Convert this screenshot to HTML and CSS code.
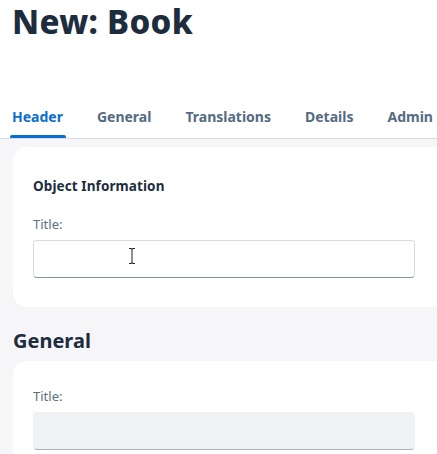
FILE: index.html
```html
<!DOCTYPE html>
<html>
<head>
<meta charset="utf-8">
<link rel="stylesheet" href="styles.css">
</head>
<body>
<div class="page">
  <header class="head">
    <h1 class="title">New: Book</h1>
    <nav class="tabs">
      <span class="tab active">Header</span>
      <span class="tab">General</span>
      <span class="tab">Translations</span>
      <span class="tab">Details</span>
      <span class="tab">Admin</span>
    </nav>
  </header>
  <main class="content">
    <section class="card card-first">
      <h3 class="group-title">Object Information</h3>
      <label class="label">Title:</label>
      <div class="input">
        <svg class="cursor" width="8" height="18" viewBox="0 0 8 18"><path d="M1 1.5h2.2M4.8 1.5h2.2M4 2v14M1 16.5h2.2M4.8 16.5h2.2M3 1.5c.6 0 1 .3 1 .8c0-.5.4-.8 1-.8M3 16.5c.6 0 1-.3 1-.8c0 .5.4.8 1 .8" fill="none" stroke="#222" stroke-width="1"/></svg>
      </div>
    </section>
    <h2 class="section-title">General</h2>
    <section class="card card-second">
      <label class="label">Title:</label>
      <div class="input readonly"></div>
    </section>
  </main>
</div>
</body>
</html>
```
FILE: styles.css
```css
html, body {
  margin: 0;
  padding: 0;
}
body {
  background: #f6f6f9;
  font-family: "Noto Sans", "Open Sans", sans-serif;
  color: #1d2d3e;
  overflow: hidden;
  width: 437px;
  height: 454px;
}
.head {
  background: #fff;
  border-bottom: 1px solid #d9dde1;
  padding: 0 0 0 12px;
}
.title {
  margin: 0;
  padding-top: 1px;
  height: 95px;
  font-size: 33px;
  font-weight: 800;
  line-height: 42px;
  color: #1d2d3e;
  letter-spacing: 0.3px;
}
.tabs {
  display: flex;
  gap: 34px;
  height: 42px;
  white-space: nowrap;
}
.tab {
  position: relative;
  font-size: 14px;
  font-weight: 700;
  color: #556b82;
  line-height: 42px;
}
.tab.active {
  color: #0a6ed1;
}
.tab.active::after {
  content: "";
  position: absolute;
  left: -2px;
  right: -3px;
  bottom: 0;
  height: 3px;
  border-radius: 2px 2px 0 0;
  background: #0a6ed1;
}
.content {
  padding-top: 8px;
}
.card {
  background: #fff;
  margin-left: 13px;
  width: 440px;
  border-radius: 14px 0 0 14px;
  padding: 0 0 0 20px;
  box-sizing: border-box;
}
.card-first {
  height: 160px;
  padding-top: 31px;
}
.card-second {
  padding-top: 27px;
  height: 100px;
  border-radius: 14px 0 0 0;
}
.group-title {
  margin: 0;
  font-size: 13.5px;
  font-weight: 700;
  line-height: 16px;
  color: #1d2d3e;
  letter-spacing: 0.1px;
}
.label {
  display: block;
  margin-top: 22px;
  font-size: 13px;
  line-height: 16px;
  color: #5b6f84;
}
.card-second .label {
  margin-top: 0;
}
.input {
  position: relative;
  margin-top: 8px;
  width: 382px;
  height: 38px;
  box-sizing: border-box;
  background: #fff;
  border: 1px solid #d9dde1;
  border-bottom: 1px solid #8396a8;
  border-radius: 4px;
}
.input.readonly {
  margin-top: 8px;
  background: #eff1f2;
  border-color: #eff1f2;
  border-bottom-color: #a9b4be;
}
.cursor {
  position: absolute;
  left: 94px;
  top: 6px;
}
.section-title {
  margin: 0;
  padding: 22px 0 0 13px;
  height: 32px;
  font-size: 20px;
  font-weight: 700;
  line-height: 24px;
  color: #1d2d3e;
}
```
